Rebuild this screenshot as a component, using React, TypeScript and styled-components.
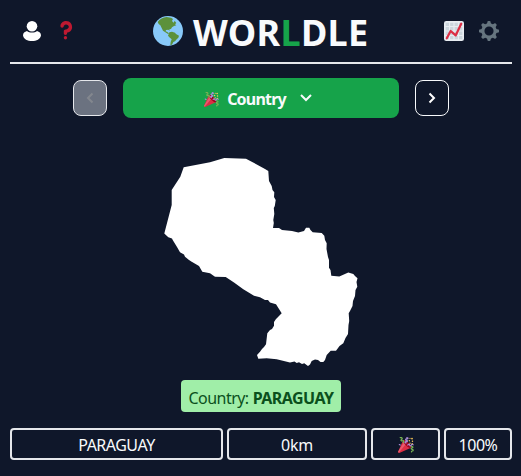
import React from "react";
import styled, { createGlobalStyle } from "styled-components";

const GlobalStyle = createGlobalStyle`
  * { box-sizing: border-box; }
  body {
    margin: 0;
    background: #0f172a;
    color: #f8fafc;
    font-family: "Noto Sans", "Open Sans", sans-serif;
    overflow: hidden;
  }
  svg { display: block; flex: none; }
`;

const Page = styled.main`
  display: flex;
  flex-direction: column;
  height: 476px;
  padding: 0 9px 0 10px;
`;

const Header = styled.header`
  display: flex;
  align-items: center;
  justify-content: space-between;
  height: 64px;
  padding: 0 13px 0 12px;
  border-bottom: 2px solid #e5e7eb;
`;

const IconGroup = styled.div<{ $gap: number; $end?: boolean }>`
  display: flex;
  justify-content: ${(p) => (p.$end ? "flex-end" : "flex-start")};
  gap: ${(p) => p.$gap}px;
  width: ${(p) => (p.$end ? 57 : 58)}px;
`;

const Brand = styled.h1`
  display: flex;
  align-items: center;
  gap: 10px;
  margin: 0;
  font-size: 36px;
  line-height: 40px;
`;

const BrandText = styled.span`
  width: 176px;
  padding-top: 3px;
  white-space: nowrap;
  letter-spacing: 0.3px;
`;

const Accent = styled.span`
  color: #16a34a;
`;

const ModeBar = styled.nav`
  display: flex;
  align-items: center;
  justify-content: center;
  gap: 16px;
  margin-top: 14px;
  height: 40px;
`;

const StepButton = styled.button`
  display: flex;
  align-items: center;
  justify-content: center;
  width: 34px;
  height: 36px;
  padding: 0;
  border: 1px solid #f8fafc;
  border-radius: 8px;
  background: transparent;
  color: #fff;
  &:disabled {
    padding: 0 1px 0 0;
    background: #6b7280;
    border-color: #e5e7eb;
    color: #83878e;
  }
`;

const ModeButton = styled.button`
  display: flex;
  align-items: center;
  justify-content: center;
  width: 276px;
  height: 40px;
  padding: 2px 6px 0 0;
  border: 0;
  border-radius: 8px;
  background: #16a34a;
  color: #f8fafc;
  font: 700 16px "Noto Sans", sans-serif;
`;

const ModeLabel = styled.span`
  margin: 0 14px 0 8px;
  letter-spacing: -0.8px;
`;

const MapArea = styled.section`
  display: flex;
  justify-content: center;
  height: 262px;
  padding-top: 39px;
`;

const Answer = styled.div`
  align-self: center;
  display: flex;
  align-items: center;
  justify-content: center;
  gap: 4px;
  width: 160px;
  height: 32px;
  padding-top: 3px;
  border-radius: 4px;
  background: #a0eea8;
  color: #0b501c;
  font-size: 16px;
  letter-spacing: -0.53px;
  white-space: nowrap;
`;

const Guess = styled.div`
  display: grid;
  grid-template-columns: 213px 140px 69px 68px;
  gap: 4px;
  margin-top: 16px;
`;

const Cell = styled.div<{ $tracking?: number }>`
  display: flex;
  align-items: center;
  justify-content: center;
  height: 32px;
  padding-top: 2px;
  border: 2px solid #e5e7eb;
  border-radius: 4px;
  font-size: 16px;
  letter-spacing: ${(p) => p.$tracking ?? 0}px;
`;

const PersonIcon = () => (
  <svg width="20" height="22" viewBox="0 0 20 22" fill="#fff">
    <circle cx="10" cy="6.2" r="5.3" />
    <path d="M5 11C7.2 13.1 12.8 13.1 15 11C17.3 11.6 19 13.2 19 15.4C18.3 19 14.6 21 10 21S1.7 19 1 15.4C1 13.2 2.7 11.6 5 11Z" />
  </svg>
);

const QuestionIcon = () => (
  <svg width="20" height="20" viewBox="0 0 36 36" fill="#be1931">
    <path d="M17 27c-1.657 0-3-1.343-3-3v-4c0-1.657 1.343-3 3-3 .603-.006 6-1 6-5 0-2-2-4-5-4-2.441 0-4 2-4 3 0 1.657-1.343 3-3 3s-3-1.343-3-3c0-4.878 4.58-9 10-9 8 0 11 5.982 11 11 0 4.145-2.277 7.313-6.413 8.92-.9.351-1.79.587-2.587.747V24c0 1.657-1.343 3-3 3z" />
    <circle cx="17" cy="32" r="3" />
  </svg>
);

const GlobeIcon = () => (
  <svg width="30" height="30" viewBox="0 0 90 90">
    <circle cx="45" cy="45" r="45" fill="#88c9f9" />
    <path
      fill="#5c913b"
      d="M14 18C20 9 30 4 41 3L54 5L60 9L57 15L62 20L65 14L70 21L66 25L70 28L63 30L57 34L54 39L49 40L50 44L46 41L39 42L38 46L43 48L48 52L45 54L37 49L30 44L26 36L22 28L17 24ZM49 49L57 47L66 50L69 54L78 59L76 65L71 70L66 76L61 78L57 86L52 87L53 78L56 70L49 64L45 59Z"
    />
  </svg>
);

const ChartIcon = () => (
  <svg width="20" height="20" viewBox="0 0 36 36">
    <rect width="36" height="36" rx="4" fill="#e9eef2" />
    <path
      fill="#ccd6dd"
      d="M3 3h6v6H3zM11 3h6v6h-6zM19 3h6v6h-6zM27 3h6v6h-6zM3 11h6v6H3zM11 11h6v6h-6zM19 11h6v6h-6zM27 11h6v6h-6zM3 19h6v6H3zM11 19h6v6h-6zM19 19h6v6h-6zM27 19h6v6h-6zM3 27h6v6H3zM11 27h6v6h-6zM19 27h6v6h-6zM27 27h6v6h-6z"
    />
    <path
      d="M5 31L12 18L21 26L31 5"
      fill="none"
      stroke="#dd2e44"
      strokeWidth="4"
      strokeLinecap="round"
      strokeLinejoin="round"
    />
  </svg>
);

const GearIcon = () => (
  <svg width="20" height="20" viewBox="-18 -18 36 36">
    <circle r="11" fill="none" stroke="#66757f" strokeWidth="5.6" />
    {[0, 45, 90, 135, 180, 225, 270, 315].map((angle) => (
      <path
        key={angle}
        transform={`rotate(${angle})`}
        fill="#66757f"
        d="M-3.8 -12.5L-2.500 -17Q-2.200 -18 -1.200 -18H1.200Q2.200 -18 2.500 -17L3.800 -12.500Z"
      />
    ))}
  </svg>
);

const PartyIcon = ({ size }: { size: number }) => (
  <svg width={size} height={size} viewBox="0 0 36 36">
    <path
      fill="#dd2e44"
      d="M11.626 7.488c-.112.112-.197.247-.268.395l-.008-.008L.134 33.141l.011.011c-.208.403.14 1.223.853 1.937.713.713 1.533 1.061 1.936.853l.01.01L28.21 24.735l-.008-.009c.147-.07.282-.155.395-.269 1.562-1.562-.971-6.627-5.656-11.313-4.687-4.686-9.752-7.218-11.315-5.656z"
    />
    <path
      fill="#ea596e"
      d="M13 12L.416 32.506l-.282.635.011.011c-.208.403.14 1.223.853 1.937.232.232.473.408.709.557L17 17l-4-5z"
    />
    <path
      fill="#a0041e"
      d="M23.012 13.066c4.67 4.672 7.263 9.652 5.789 11.124-1.473 1.474-6.453-1.118-11.126-5.788-4.671-4.672-7.263-9.654-5.79-11.127 1.474-1.473 6.454 1.119 11.127 5.791z"
    />
    <g fill="none" strokeWidth="2.8" strokeLinecap="round">
      <path stroke="#aa8dd8" d="M20 1.500c4 .5 2.500 3 0 2.700-3.500-.3-4 3-.8 3.500 3.300.5 2 3-.8 2.800-3.400-.2-3 2.500-.5 2.900" />
      <path stroke="#aa8dd8" d="M22 18c2-3 4-1 4.500.5 1 2.500 3 1 3.500-.5.8-3 3-2 4-.5" />
      <path stroke="#77b255" d="M5 1.500c4-1 6 2 3 4-3 2 0 4 2 3 3-1 4 2 2 4" />
      <path stroke="#77b255" d="M30.500 21c4 .5 4 3 1 3.500-3 .5-2 3 .5 3.500 3 .5 3 3 0 3.500-1.500.3-2 1-1.500 2" />
      <path stroke="#aa8dd8" d="M3 17l2 1" />
    </g>
    <g fill="#fdcb58">
      <circle cx="25.5" cy="8.5" r="1.7" />
      <circle cx="31.5" cy="3.5" r="2" />
      <circle cx="32.5" cy="9.5" r="1.7" />
      <circle cx="27" cy="14" r="1.5" />
      <circle cx="27" cy="3" r="1.4" />
      <circle cx="32" cy="15" r="1.3" />
    </g>
  </svg>
);

const Chevron = ({ d, width, height }: { d: string; width: number; height: number }) => (
  <svg
    width={width}
    height={height}
    viewBox={`0 0 ${width} ${height}`}
    fill="none"
    stroke="currentColor"
    strokeWidth="2"
  >
    <path d={d} />
  </svg>
);

const CountryShape = () => (
  <svg width="196" height="210" viewBox="163 157 196 210" fill="#fff">
    <path d="M164.300 233.500L171.700 205V190L180.300 176.700L183.700 167.300L210 162.300L224.300 158L246 158.700L265 169L268.300 171L269 181L271.700 186L272.500 190L274.300 192.300L274 197L275.700 200L274.800 206L273.800 208L274.300 214L273.300 220L273.800 223L273 228L279 228L282 230L292 231L298.300 232.500L304 231L306 227.700H309.300L310.500 230L312.700 232.300L321.700 233L324.300 235.700L325 240L326.700 243.300L326.500 249L328 257L329 260V267.700L330.500 270L331.300 275.700L339.300 276.500L348.300 272.500L353.300 274L355 276L357.500 278.300L356.500 282L357.300 286.700L355.500 290L355 296L353 301L352.500 306L350 311L348.700 313.300L349.200 321L348.500 325L348 334L345.500 338L343.300 343.300L339.500 346L336 350.700L330.700 350.700L326.700 355L325 360L323.300 362L320.500 362L318 360L315 359.500L311.700 361L310 364.500L308 366L304.300 363.300L302 364L299 362.300L296.700 363L294.500 361.500L290 362.500L276.700 359.300L266.700 358.300L258.300 358.700L257 355L260 351.700L262 349L264 347L266 344.300L266.500 340L267.300 333.300L270 330L272 329L274 325.700V322L276 319L279 316L281.700 313.300L279 309L276 304.300L270 302.500L268 300L265 300L260 297.300L254 295.700L243.300 289.300L234 282.500L225.700 277L215 276.700L210 273.300L202.300 271.700L199 266L191.700 261.700L189 260L185 256.700L184 254.500L180 252.300L177 247L172.700 240L172 238.500L168.300 237.300Z" />
  </svg>
);

export default function App() {
  return (
    <>
      <GlobalStyle />
      <Page>
        <Header>
          <IconGroup $gap={14}>
            <PersonIcon />
            <QuestionIcon />
          </IconGroup>
          <Brand>
            <GlobeIcon />
            <BrandText>
              WOR<Accent>L</Accent>DLE
            </BrandText>
          </Brand>
          <IconGroup $gap={15} $end>
            <ChartIcon />
            <GearIcon />
          </IconGroup>
        </Header>
        <ModeBar>
          <StepButton disabled aria-label="Previous mode">
            <Chevron width={8} height={12} d="M6.500 1.500L2 6L6.500 10.500" />
          </StepButton>
          <ModeButton>
            <PartyIcon size={15} />
            <ModeLabel>Country</ModeLabel>
            <Chevron width={12} height={12} d="M1 2L6 7L11 2" />
          </ModeButton>
          <StepButton aria-label="Next mode">
            <Chevron width={8} height={12} d="M1.500 1.500L6 6L1.500 10.500" />
          </StepButton>
        </ModeBar>
        <MapArea>
          <CountryShape />
        </MapArea>
        <Answer>
          Country: <strong>PARAGUAY</strong>
        </Answer>
        <Guess>
          <Cell $tracking={-0.5}>PARAGUAY</Cell>
          <Cell $tracking={-0.3}>0km</Cell>
          <Cell>
            <PartyIcon size={16} />
          </Cell>
          <Cell $tracking={-0.5}>100%</Cell>
        </Guess>
      </Page>
    </>
  );
}
